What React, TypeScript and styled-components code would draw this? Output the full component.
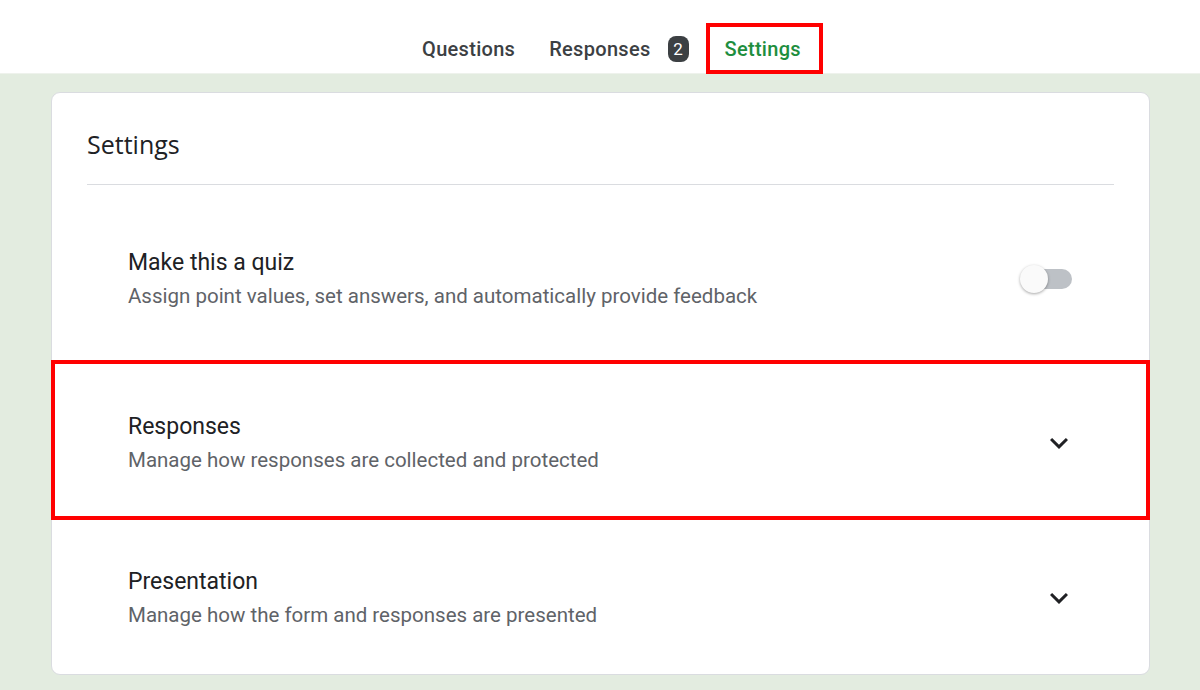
import React from "react";
import styled, { createGlobalStyle } from "styled-components";

const Global = createGlobalStyle`
  html, body { margin: 0; padding: 0; }
  body {
    background: #e3ece0;
    font-family: Roboto, "Noto Sans", Arial, sans-serif;
    color: #202124;
  }
`;

const Page = styled.div`
  width: 1200px;
  height: 690px;
  overflow: hidden;
  display: flex;
  flex-direction: column;
`;

const Header = styled.header`
  height: 74px;
  background: #ffffff;
  border-bottom: 1px solid #eef2ec;
  box-sizing: border-box;
  display: flex;
  justify-content: center;
  align-items: flex-end;
`;

const Tabs = styled.nav`
  display: flex;
  align-items: center;
  height: 51px;
  margin-left: 28px;
  margin-bottom: -1px;
`;

const Tab = styled.div<{ $active?: boolean; $marked?: boolean }>`
  height: 51px;
  box-sizing: border-box;
  display: flex;
  align-items: center;
  gap: 17px;
  padding: 0 ${(p) => (p.$marked ? "18px 0 15px" : "17px")};
  border: ${(p) => (p.$marked ? "4px solid #ff0000" : "none")};
  font-size: 20px;
  font-weight: 500;
  letter-spacing: 0.3px;
  color: ${(p) => (p.$active ? "#1e8e3e" : "#3c4043")};
`;

const Badge = styled.span`
  display: inline-flex;
  align-items: center;
  justify-content: center;
  width: 21px;
  height: 26px;
  border-radius: 8px;
  background: #3c4043;
  color: #ffffff;
  font-size: 17px;
  font-weight: 400;
  letter-spacing: 0;
`;

const Card = styled.main`
  margin: 18px 0 0 51px;
  width: 1099px;
  height: 583px;
  box-sizing: border-box;
  background: #ffffff;
  border: 1px solid #dadce0;
  border-radius: 9px;
  display: flex;
  flex-direction: column;
`;

const CardHead = styled.div`
  margin: 0 35px;
  padding: 34px 0 23px;
  border-bottom: 1px solid #dadce0;
`;

const CardTitle = styled.h1`
  margin: 0;
  font-family: "Open Sans", Roboto, sans-serif;
  font-size: 25px;
  line-height: 34px;
  font-weight: 400;
  color: #202124;
`;

const Row = styled.section<{ $marked?: boolean; $top: number }>`
  flex: none;
  margin: ${(p) => p.$top}px -1px 0 -1px;
  height: 160px;
  box-sizing: border-box;
  border: 4px solid ${(p) => (p.$marked ? "#ff0000" : "transparent")};
  padding: ${(p) => (p.$marked ? "6px" : "0")} 78px 0 73px;
  display: flex;
  align-items: center;
  justify-content: space-between;
`;

const RowText = styled.div`
  display: flex;
  flex-direction: column;
  gap: 6px;
`;

const RowTitle = styled.div`
  font-size: 23px;
  line-height: 28px;
  color: #202124;
`;

const RowSub = styled.div`
  font-size: 20.5px;
  line-height: 26px;
  color: #5f6368;
`;

const Toggle = styled.div`
  position: relative;
  width: 52px;
  height: 30px;
  margin-right: -4px;
`;

const Track = styled.div`
  position: absolute;
  right: 0;
  top: 5px;
  width: 46px;
  height: 20px;
  border-radius: 10px;
  background: #bdc1c6;
`;

const Thumb = styled.div`
  position: absolute;
  left: 0;
  top: 1px;
  width: 28px;
  height: 28px;
  border-radius: 50%;
  background: #fafafa;
  box-shadow: 0 1px 3px rgba(0, 0, 0, 0.35);
`;

const Chevron = styled.svg`
  width: 36px;
  height: 36px;
  margin-right: -9px;
  fill: #202124;
`;

const ExpandMore = () => (
  <Chevron viewBox="0 0 24 24">
    <path d="M16.59 8.59L12 13.17 7.41 8.59 6 10l6 6 6-6z" />
  </Chevron>
);

export default function App() {
  return (
    <Page>
      <Global />
      <Header>
        <Tabs>
          <Tab>Questions</Tab>
          <Tab>
            Responses <Badge>2</Badge>
          </Tab>
          <Tab $active $marked>
            Settings
          </Tab>
        </Tabs>
      </Header>
      <Card>
        <CardHead>
          <CardTitle>Settings</CardTitle>
        </CardHead>
        <Row $top={14}>
          <RowText>
            <RowTitle>Make this a quiz</RowTitle>
            <RowSub>Assign point values, set answers, and automatically provide feedback</RowSub>
          </RowText>
          <Toggle>
            <Track />
            <Thumb />
          </Toggle>
        </Row>
        <Row $marked $top={1}>
          <RowText>
            <RowTitle>Responses</RowTitle>
            <RowSub>Manage how responses are collected and protected</RowSub>
          </RowText>
          <ExpandMore />
        </Row>
        <Row $top={-2}>
          <RowText>
            <RowTitle>Presentation</RowTitle>
            <RowSub>Manage how the form and responses are presented</RowSub>
          </RowText>
          <ExpandMore />
        </Row>
      </Card>
    </Page>
  );
}
